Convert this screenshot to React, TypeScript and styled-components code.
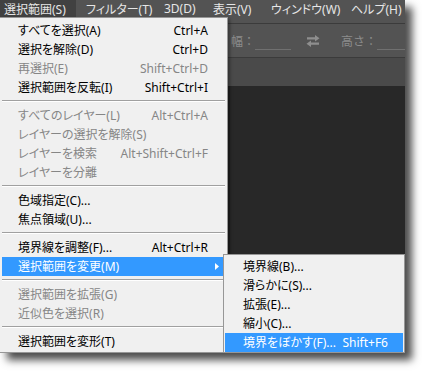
import React from 'react';
import styled, { createGlobalStyle } from 'styled-components';

const GlobalStyle = createGlobalStyle`
  *, *::before, *::after { box-sizing: border-box; }
  html, body { margin: 0; padding: 0; background: #ffffff; }
  body { width: 422px; height: 371px; overflow: hidden; }
`;

const UI_FONT = `"Noto Sans", "Noto Sans CJK JP", sans-serif`;

const Stage = styled.div`
  width: 422px;
  height: 371px;
  background: #ffffff;
`;

const AppWindow = styled.div`
  position: relative;
  width: 405px;
  height: 353px;
  background: #535353;
  display: flex;
  flex-direction: column;
  overflow: hidden;
  box-shadow: 7px 7px 8px rgba(0, 0, 0, 0.7);
  font-family: ${UI_FONT};
  font-feature-settings: "palt" 1;
`;

const MenuBar = styled.div`
  flex: none;
  height: 24px;
  display: flex;
  align-items: flex-start;
  gap: 6px;
  border-bottom: 1px solid #3b3b3b;
`;

const MenuTitle = styled.div<{ $active?: boolean; $w: number }>`
  flex: none;
  width: ${(p) => p.$w}px;
  height: 17px;
  display: flex;
  align-items: center;
  padding-left: 4px;
  background: ${(p) => (p.$active ? '#414141' : 'transparent')};
  color: #e6e6e6;
  font-size: 12px;
  white-space: nowrap;
`;

const OptionsBar = styled.div`
  flex: none;
  height: 34px;
  display: flex;
  align-items: center;
  padding-left: 231px;
  border-bottom: 1px solid #3b3b3b;
`;

const OptLabel = styled.span`
  color: #8c8c8c;
  font-size: 12px;
  white-space: nowrap;
  font-feature-settings: normal;
`;

const Field = styled.div<{ $w?: number }>`
  height: 16px;
  margin-top: 2px;
  border-bottom: 1px solid #707070;
  ${(p) => (p.$w ? `width: ${p.$w}px;` : 'flex: 1;')}
`;

const SwapIcon = styled.svg`
  flex: none;
  margin: 0 21px 0 15px;
`;

const Workspace = styled.div`
  flex: 1;
  display: flex;
  min-height: 0;
`;

const Dock = styled.div`
  flex: none;
  width: 228px;
  background: #535353;
`;

const DocArea = styled.div`
  flex: 1;
  display: flex;
  flex-direction: column;
`;

const TabBar = styled.div`
  flex: none;
  height: 28px;
  background: #4a4a4a;
`;

const Canvas = styled.div`
  flex: 1;
  background: #282828;
  border-left: 2px solid #1f1f1f;
`;

const Dropdown = styled.div`
  position: absolute;
  left: -1px;
  top: 17px;
  width: 229px;
  background: #f0f0f0;
  border: 1px solid #979797;
  padding: 3px 2px 1px;
  box-shadow: 2px 2px 3px rgba(0, 0, 0, 0.35);
`;

const Submenu = styled.div`
  position: absolute;
  left: 223px;
  top: 254px;
  width: 182px;
  background: #f0f0f0;
  border: 1px solid #979797;
  padding: 2px 1px 0;
`;

const Row = styled.div<{ $hl?: boolean; $disabled?: boolean; $pl: number; $pr: number }>`
  height: 19px;
  display: grid;
  grid-template-columns: 1fr auto ${(p) => p.$pr}px;
  align-items: center;
  padding-left: ${(p) => p.$pl}px;
  font-size: 12px;
  line-height: 19px;
  white-space: nowrap;
  background: ${(p) => (p.$hl ? '#3399ff' : 'transparent')};
  color: ${(p) => (p.$hl ? '#ffffff' : p.$disabled ? '#868686' : '#000000')};
`;

const Shortcut = styled.span``;

const ArrowCell = styled.span`
  display: flex;
  justify-content: center;
  align-items: center;
`;

const Separator = styled.div`
  height: 2px;
  margin: 3px 0 4px;
  border-top: 1px solid #a0a0a0;
  border-bottom: 1px solid #ffffff;
`;

type Item =
  | { sep: true }
  | { label: string; sc?: string; disabled?: boolean; hl?: boolean; sub?: boolean };

const mainItems: Item[] = [
  { label: 'すべてを選択(A)', sc: 'Ctrl+A' },
  { label: '選択を解除(D)', sc: 'Ctrl+D' },
  { label: '再選択(E)', sc: 'Shift+Ctrl+D', disabled: true },
  { label: '選択範囲を反転(I)', sc: 'Shift+Ctrl+I' },
  { sep: true },
  { label: 'すべてのレイヤー(L)', sc: 'Alt+Ctrl+A', disabled: true },
  { label: 'レイヤーの選択を解除(S)', disabled: true },
  { label: 'レイヤーを検索', sc: 'Alt+Shift+Ctrl+F', disabled: true },
  { label: 'レイヤーを分離', disabled: true },
  { sep: true },
  { label: '色域指定(C)...' },
  { label: '焦点領域(U)...' },
  { sep: true },
  { label: '境界線を調整(F)...', sc: 'Alt+Ctrl+R' },
  { label: '選択範囲を変更(M)', hl: true, sub: true },
  { sep: true },
  { label: '選択範囲を拡張(G)', disabled: true },
  { label: '近似色を選択(R)', disabled: true },
  { sep: true },
  { label: '選択範囲を変形(T)' },
];

const subItems: Item[] = [
  { label: '境界線(B)...' },
  { label: '滑らかに(S)...' },
  { label: '拡張(E)...' },
  { label: '縮小(C)...' },
  { label: '境界をぼかす(F)...', sc: 'Shift+F6', hl: true },
];

const menuTitles: { t: string; w: number }[] = [
  { t: '選択範囲(S)', w: 76 },
  { t: 'フィルター(T)', w: 72 },
  { t: '3D(D)', w: 43 },
  { t: '表示(V)', w: 52 },
  { t: 'ウィンドウ(W)', w: 74 },
  { t: 'ヘルプ(H)', w: 58 },
];

function MenuList({ items, pl, pr }: { items: Item[]; pl: number; pr: number }) {
  return (
    <>
      {items.map((it, i) =>
        'sep' in it ? (
          <Separator key={i} />
        ) : (
          <Row key={i} $hl={it.hl} $disabled={it.disabled} $pl={pl} $pr={pr}>
            <span>{it.label}</span>
            <Shortcut>{it.sc ?? ''}</Shortcut>
            <ArrowCell>
              {it.sub && (
                <svg width="4" height="7" viewBox="0 0 4 7">
                  <path d="M0 0 L4 3.5 L0 7 Z" fill="#ffffff" />
                </svg>
              )}
            </ArrowCell>
          </Row>
        )
      )}
    </>
  );
}

export default function App() {
  return (
    <>
      <GlobalStyle />
      <Stage>
        <AppWindow>
          <MenuBar>
            {menuTitles.map((m, i) => (
              <MenuTitle key={m.t} $active={i === 0} $w={m.w}>
                {m.t}
              </MenuTitle>
            ))}
          </MenuBar>
          <OptionsBar>
            <OptLabel>幅：</OptLabel>
            <Field $w={36} />
            <SwapIcon width="14" height="12" viewBox="0 0 14 12">
              <path d="M1 2.2 H9 V0 L13.5 3.3 L9 6.6 V4.4 H1 Z" fill="#8e8e8e" />
              <path d="M13 7.6 H5 V5.4 L0.5 8.7 L5 12 V9.8 H13 Z" fill="#8e8e8e" />
            </SwapIcon>
            <OptLabel>高さ：</OptLabel>
            <Field />
          </OptionsBar>
          <Workspace>
            <Dock />
            <DocArea>
              <TabBar />
              <Canvas />
            </DocArea>
          </Workspace>

          <Dropdown>
            <MenuList items={mainItems} pl={16} pr={17} />
          </Dropdown>
          <Submenu>
            <MenuList items={subItems} pl={18} pr={15} />
          </Submenu>
        </AppWindow>
      </Stage>
    </>
  );
}
